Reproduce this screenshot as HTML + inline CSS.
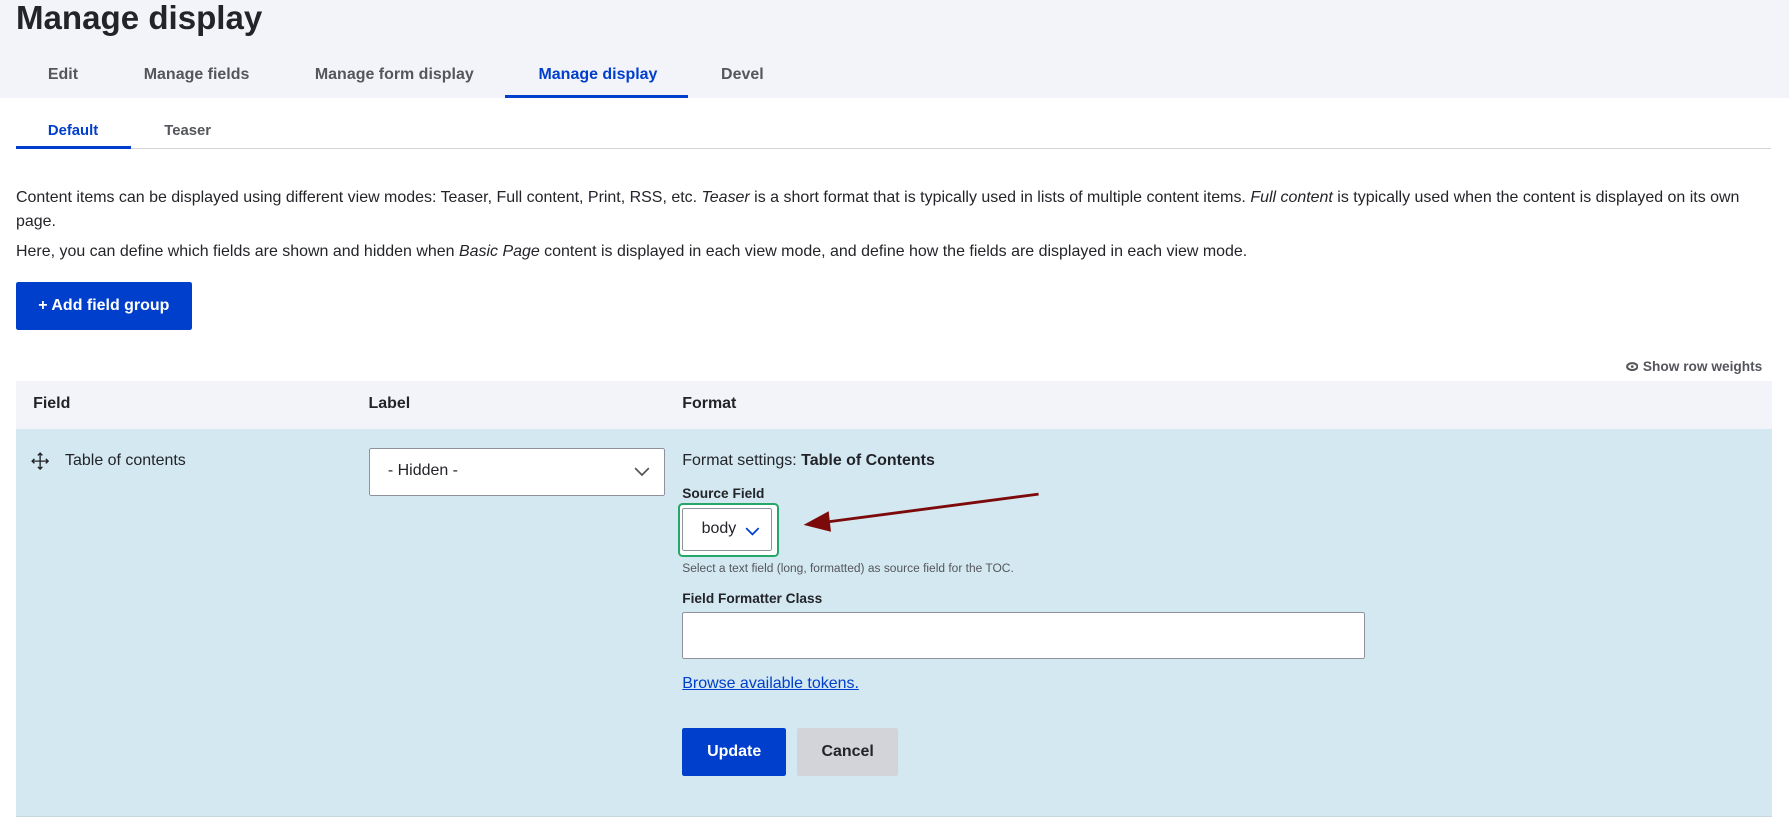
<!DOCTYPE html>
<html><head><style>
html{zoom:1.1409}
body{margin:0;width:1568px;height:730px;position:relative;background:#fff;font-family:"Liberation Sans",sans-serif;color:#232429;overflow:hidden}
.a{position:absolute;white-space:nowrap}
.tab{font-weight:bold;font-size:14px;color:#55565b}
p{margin:0}
</style></head><body>
<div class="a" style="left:0;top:0;width:1568px;height:86px;background:#f3f4f9"></div>
<div class="a" style="left:14px;top:0px;font-size:29px;font-weight:bold;color:#232429">Manage display</div>
<div class="a tab" style="left:42px;top:58px">Edit</div>
<div class="a tab" style="left:126px;top:58px">Manage fields</div>
<div class="a tab" style="left:276px;top:58px">Manage form display</div>
<div class="a tab" style="left:472px;top:58px;color:#003ecc">Manage display</div>
<div class="a tab" style="left:632px;top:58px">Devel</div>
<div class="a" style="left:443px;top:83px;width:160px;height:3px;background:#003ecc"></div>

<div class="a tab" style="left:42px;top:108px;font-size:13px;color:#003ecc">Default</div>
<div class="a tab" style="left:144px;top:108px;font-size:13px">Teaser</div>
<div class="a" style="left:14px;top:130px;width:1538px;height:1px;background:#d3d4d9"></div>
<div class="a" style="left:14px;top:128px;width:101px;height:3px;background:#003ecc"></div>

<div class="a" style="left:14px;top:163px;font-size:14px;line-height:21px;white-space:normal;width:1545px">Content items can be displayed using different view modes: Teaser, Full content, Print, RSS, etc. <i>Teaser</i> is a short format that is typically used in lists of multiple content items. <i>Full content</i> is typically used when the content is displayed on its own page.</div>
<div class="a" style="left:14px;top:213px;font-size:14px">Here, you can define which fields are shown and hidden when <i>Basic Page</i> content is displayed in each view mode, and define how the fields are displayed in each view mode.</div>

<div class="a" style="left:14px;top:247px;width:154px;height:42px;background:#003ecc;color:#fff;font-weight:bold;font-size:14px;line-height:42px;text-align:center;border-radius:2px">+ Add field group</div>

<div class="a" style="left:1425px;top:315px;font-size:12px;font-weight:bold;color:#55565b"><svg width="11" height="8" viewBox="0 0 11 8" style="margin-right:4px"><ellipse cx="5.5" cy="4" rx="4.5" ry="3" fill="none" stroke="#55565b" stroke-width="1.8"/><circle cx="5.5" cy="4" r="1.2" fill="#55565b"/></svg>Show row weights</div>

<div class="a" style="left:14px;top:334px;width:1539px;height:42px;background:#f3f4f9"></div>
<div class="a" style="left:29px;top:346px;font-size:14px;font-weight:bold">Field</div>
<div class="a" style="left:323px;top:346px;font-size:14px;font-weight:bold">Label</div>
<div class="a" style="left:598px;top:346px;font-size:14px;font-weight:bold">Format</div>

<div class="a" style="left:14px;top:376px;width:1539px;height:339px;background:#d3e8f1;border-bottom:1px solid #c5d6de"></div>
<svg class="a" style="left:27px;top:396px" width="16" height="16" viewBox="0 0 16 16" fill="none" stroke="#232429" stroke-width="1.2"><path d="M8 1v14M1 8h14M6 3l2-2 2 2M6 13l2 2 2-2M3 6l-2 2 2 2M13 6l2 2-2 2"/></svg>
<div class="a" style="left:57px;top:396px;font-size:14px">Table of contents</div>

<div class="a" style="left:323px;top:393px;width:258px;height:40px;background:#fff;border:1px solid #8e929c;border-radius:2px"></div>
<div class="a" style="left:340px;top:405px;font-size:14px">- Hidden -</div>
<svg class="a" style="left:556px;top:409px" width="14" height="9" viewBox="0 0 14 9"><path d="M1 1l6 6 6-6" fill="none" stroke="#55565b" stroke-width="1.5"/></svg>

<div class="a" style="left:598px;top:396px;font-size:14px">Format settings: <b>Table of Contents</b></div>
<div class="a" style="left:598px;top:426px;font-size:12px;font-weight:bold">Source Field</div>
<div class="a" style="left:594px;top:441px;width:85px;height:44px;border:2px solid #26a769;border-radius:4px;background:#fff"></div>
<div class="a" style="left:598px;top:445px;width:79px;height:38px;border:1px solid #8e929c;border-radius:2px;box-sizing:border-box"></div>
<div class="a" style="left:615px;top:456px;font-size:14px">body</div>
<svg class="a" style="left:653px;top:462px" width="13" height="8" viewBox="0 0 13 8"><path d="M1 1l5.5 5.5L12 1" fill="none" stroke="#003ecc" stroke-width="1.5"/></svg>
<svg class="a" style="left:700px;top:425px" width="220" height="45" viewBox="0 0 220 45"><path d="M210 8L20 33" stroke="#7d0a0a" stroke-width="2.5"/><path d="M4 35L26 23L28 41Z" fill="#7d0a0a"/></svg>
<div class="a" style="left:598px;top:492px;font-size:10.5px;color:#55565b">Select a text field (long, formatted) as source field for the TOC.</div>
<div class="a" style="left:598px;top:518px;font-size:12px;font-weight:bold">Field Formatter Class</div>
<div class="a" style="left:598px;top:536px;width:597px;height:40px;background:#fff;border:1px solid #8e929c;border-radius:2px"></div>
<div class="a" style="left:598px;top:592px;font-size:14px;color:#003ecc;text-decoration:underline">Browse available tokens.</div>
<div class="a" style="left:598px;top:638px;width:91px;height:42px;background:#003ecc;color:#fff;font-weight:bold;font-size:14px;line-height:42px;text-align:center;border-radius:2px">Update</div>
<div class="a" style="left:699px;top:638px;width:88px;height:42px;background:#d3d4d9;color:#232429;font-weight:bold;font-size:14px;line-height:42px;text-align:center;border-radius:2px">Cancel</div>
</body></html>
